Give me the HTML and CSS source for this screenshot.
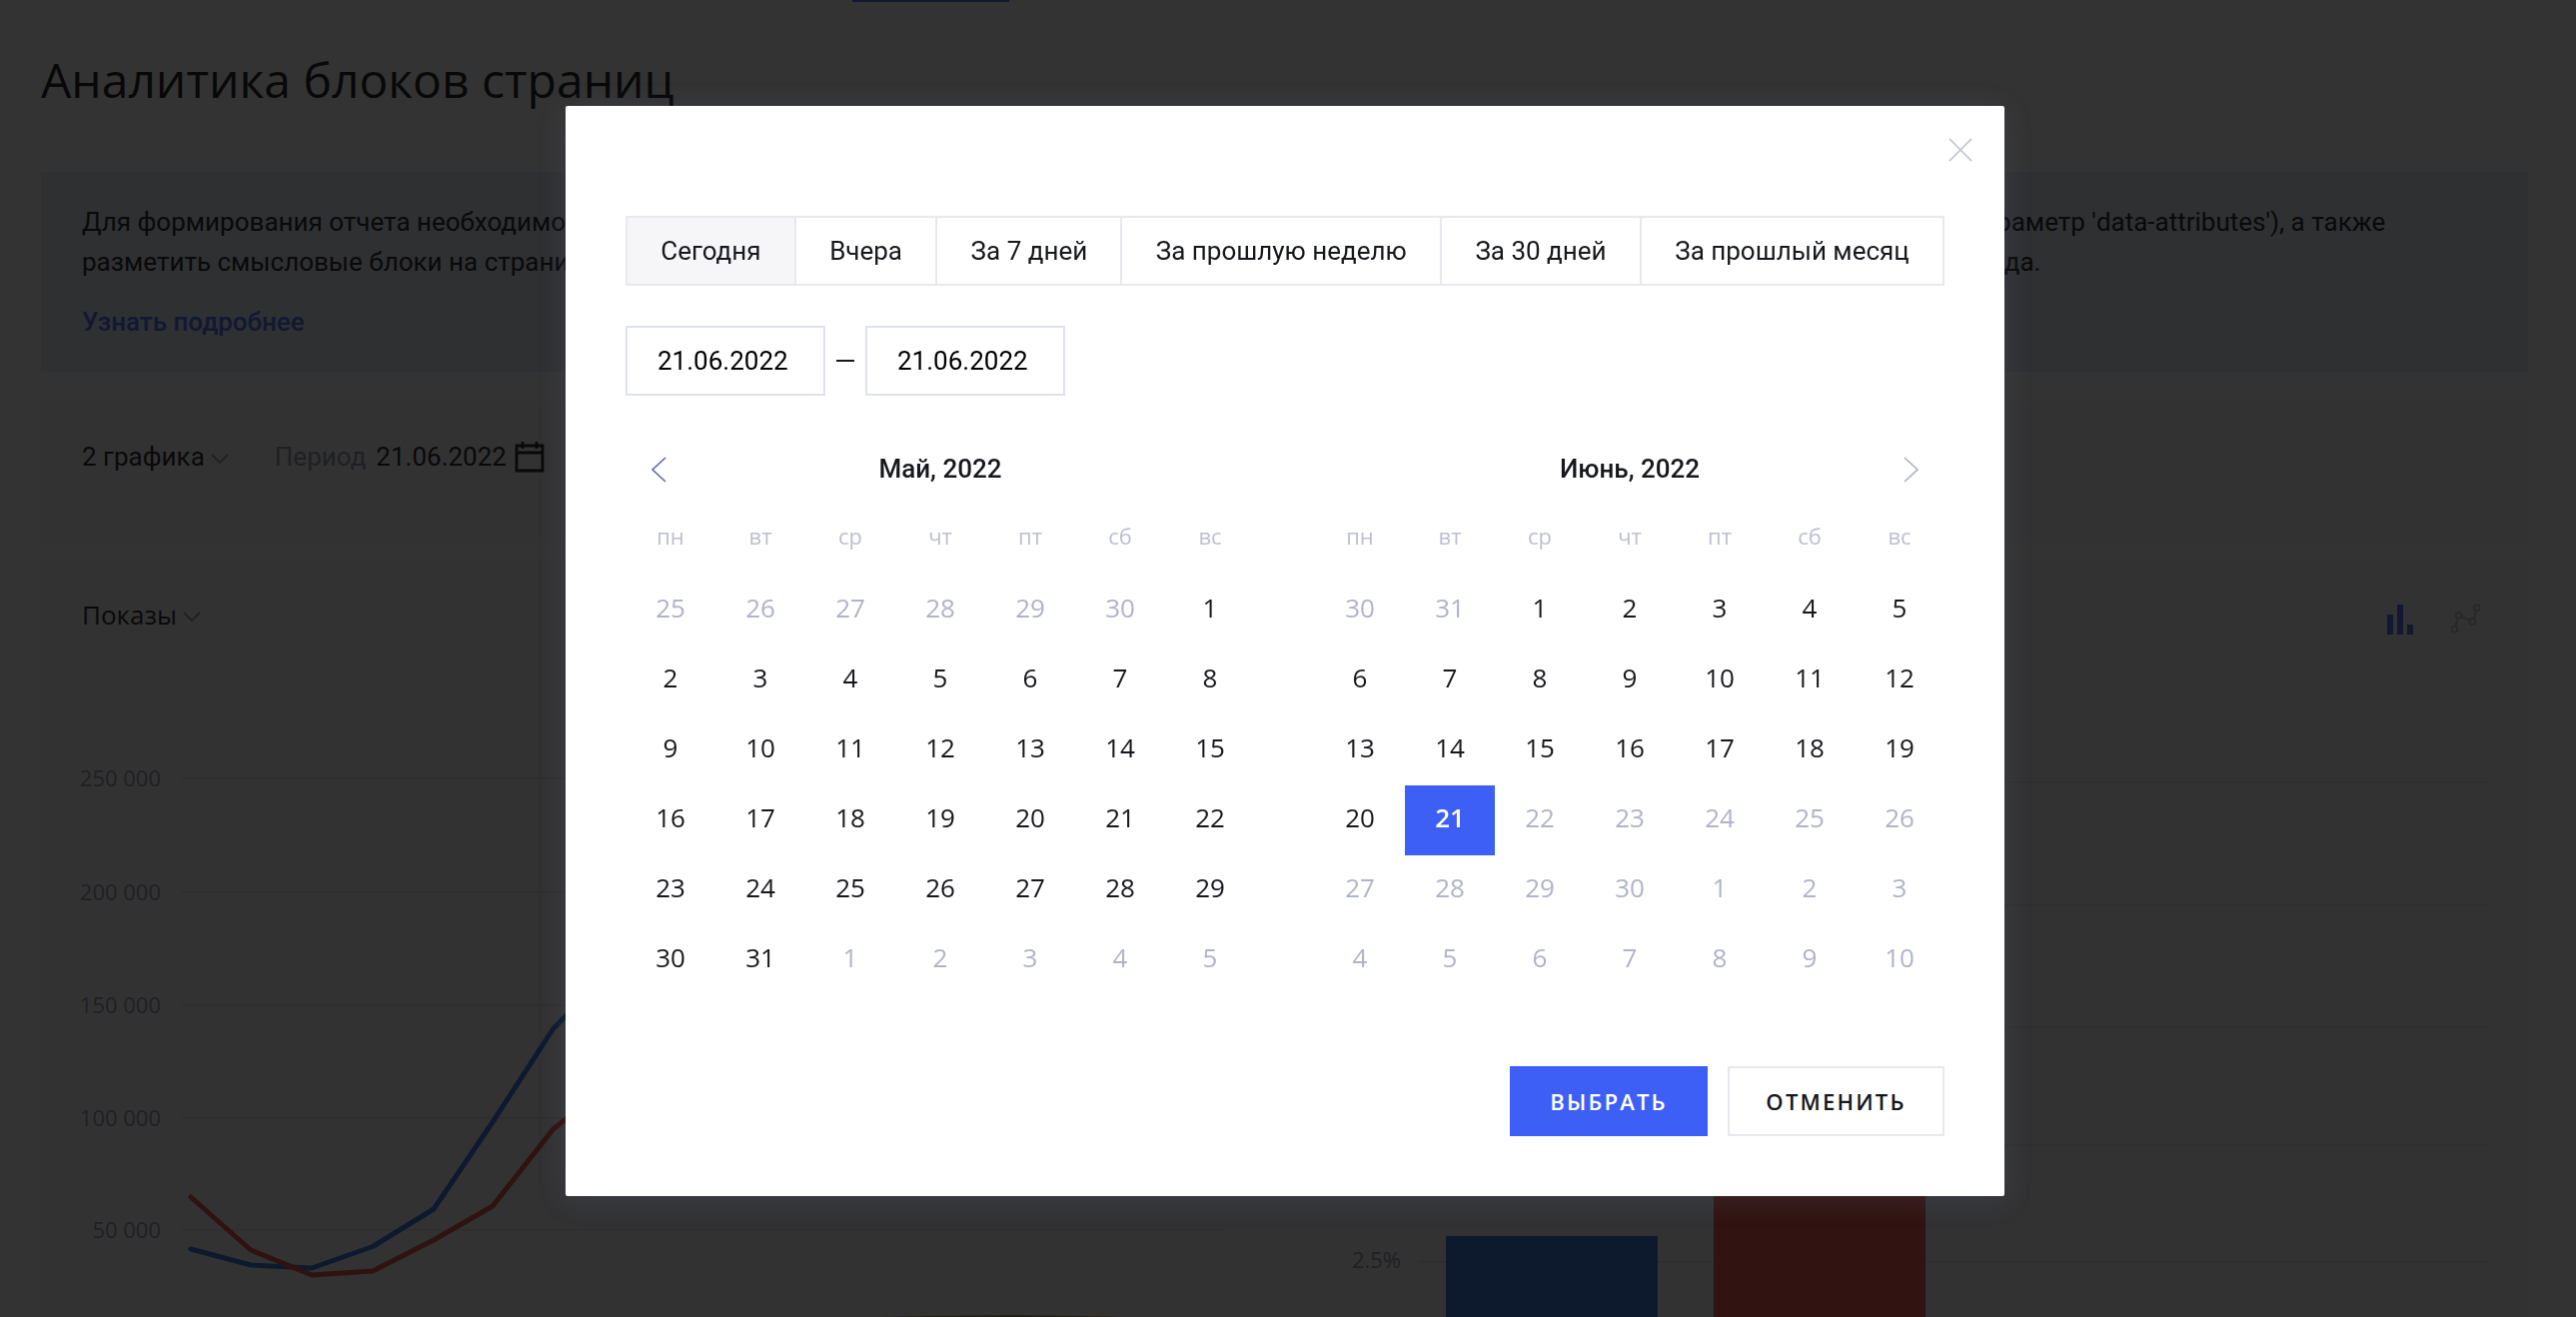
FILE: index.html
```html
<!DOCTYPE html>
<html lang="ru">
<head>
<meta charset="utf-8">
<title>Аналитика блоков страниц</title>
<link rel="stylesheet" href="styles.css">
</head>
<body>
<div class="page">
  <div class="top-tab"></div>
  <h1 class="title">Аналитика блоков страниц</h1>
  <section class="banner">
    <p class="banner-text">Для формирования отчета необходимо обновить код счетчика на страницах сайта и включить в его настройках сбор сведений об атрибутах элементов (параметр 'data-attributes'), а также<br>разметить смысловые блоки на страницах сайтов специальными атрибутами, как это подробнее описано в нужном разделе документации об установке кода.</p>
    <a class="banner-link">Узнать подробнее</a>
  </section>
  <section class="toolbar">
    <span class="select">2 графика <svg class="chev" viewBox="0 0 18 10"><path d="M1 1l8 8 8-8"/></svg></span>
    <span class="period-label">Период</span>
    <span class="period-value">21.06.2022</span>
    <svg class="cal" viewBox="0 0 30 32"><path d="M2 5h26v25H2zM2 12h26M8 1v7M22 1v7"/></svg>
  </section>
  <section class="charts">
    <div class="charts-head">
      <span class="metric">Показы <svg class="chev" viewBox="0 0 18 10"><path d="M1 1l8 8 8-8"/></svg></span>
      <span class="chart-icons">
        <svg class="ico-bars" viewBox="0 0 26 30"><path d="M0 10h6v20H0zM10 0h6v30h-6zM20 20h6v10h-6z"/></svg>
        <svg class="ico-line" viewBox="0 0 30 29"><path d="M5.3 22L7.7 13.5M11.3 12L19.7 15.7M24 14.3L26 5.8"/><circle cx="4.5" cy="24.7" r="3"/><circle cx="8.5" cy="10.7" r="3"/><circle cx="22.5" cy="17" r="3"/><circle cx="27" cy="3" r="3"/></svg>
      </span>
    </div>
    <svg class="plot" viewBox="0 0 2489 758">
      <g class="grid">
        <path d="M140 219H1184M140 333H1184M140 446H1184M140 559H1184M140 671H1184"/>
        <path d="M1379 223H2449M1379 346H2449M1379 468H2449M1379 586H2449M1379 703H2449"/>
      </g>
      <g class="ylab">
        <text x="120" y="227">250 000</text>
        <text x="120" y="341">200 000</text>
        <text x="120" y="454">150 000</text>
        <text x="120" y="567">100 000</text>
        <text x="120" y="679">50 000</text>
        <text x="1361" y="709">2.5%</text>
      </g>
      <rect class="bar-blue" x="1406" y="677" width="212" height="81"/>
      <rect class="bar-red" x="1674" y="560" width="212" height="198"/>
      <polyline class="line-blue" points="150,690 210,706 271,709 332,687.5 393,650 452,563 512.6,469.5 600,380"/>
      <polyline class="line-red" points="150,638 210,691 271,716 332,712 393,681 452,647 512.6,570 600,500"/>
      <path class="line-yellow" d="M742 764Q880 758 1000 759T1109 764"/>
    </svg>
  </section>
</div>
<div class="overlay">
  <div class="modal">
    <svg class="close" viewBox="0 0 26 26"><path d="M1 1l24 24M25 1L1 25"/></svg>
    <div class="tabs">
      <button class="tab is-active">Сегодня</button>
      <button class="tab">Вчера</button>
      <button class="tab">За 7 дней</button>
      <button class="tab">За прошлую неделю</button>
      <button class="tab">За 30 дней</button>
      <button class="tab">За прошлый месяц</button>
    </div>
    <div class="range">
      <span class="date-input">21.06.2022</span>
      <span class="dash"></span>
      <span class="date-input">21.06.2022</span>
    </div>
    <div class="months">
      <div class="month">
        <div class="month-head">
          <svg class="arrow arrow-prev" viewBox="0 0 16 26"><path d="M15 1L2 13l13 12"/></svg>
          <span>Май, 2022</span>
        </div>
        <div class="days">
          <span class="wd">пн</span><span class="wd">вт</span><span class="wd">ср</span><span class="wd">чт</span><span class="wd">пт</span><span class="wd">сб</span><span class="wd">вс</span>
          <span class="d off">25</span><span class="d off">26</span><span class="d off">27</span><span class="d off">28</span><span class="d off">29</span><span class="d off">30</span><span class="d">1</span>
          <span class="d">2</span><span class="d">3</span><span class="d">4</span><span class="d">5</span><span class="d">6</span><span class="d">7</span><span class="d">8</span>
          <span class="d">9</span><span class="d">10</span><span class="d">11</span><span class="d">12</span><span class="d">13</span><span class="d">14</span><span class="d">15</span>
          <span class="d">16</span><span class="d">17</span><span class="d">18</span><span class="d">19</span><span class="d">20</span><span class="d">21</span><span class="d">22</span>
          <span class="d">23</span><span class="d">24</span><span class="d">25</span><span class="d">26</span><span class="d">27</span><span class="d">28</span><span class="d">29</span>
          <span class="d">30</span><span class="d">31</span><span class="d off">1</span><span class="d off">2</span><span class="d off">3</span><span class="d off">4</span><span class="d off">5</span>
        </div>
      </div>
      <div class="month">
        <div class="month-head">
          <span>Июнь, 2022</span>
          <svg class="arrow arrow-next" viewBox="0 0 16 26"><path d="M1 1l13 12L1 25"/></svg>
        </div>
        <div class="days">
          <span class="wd">пн</span><span class="wd">вт</span><span class="wd">ср</span><span class="wd">чт</span><span class="wd">пт</span><span class="wd">сб</span><span class="wd">вс</span>
          <span class="d off">30</span><span class="d off">31</span><span class="d">1</span><span class="d">2</span><span class="d">3</span><span class="d">4</span><span class="d">5</span>
          <span class="d">6</span><span class="d">7</span><span class="d">8</span><span class="d">9</span><span class="d">10</span><span class="d">11</span><span class="d">12</span>
          <span class="d">13</span><span class="d">14</span><span class="d">15</span><span class="d">16</span><span class="d">17</span><span class="d">18</span><span class="d">19</span>
          <span class="d">20</span><span class="d sel">21</span><span class="d off">22</span><span class="d off">23</span><span class="d off">24</span><span class="d off">25</span><span class="d off">26</span>
          <span class="d off">27</span><span class="d off">28</span><span class="d off">29</span><span class="d off">30</span><span class="d off">1</span><span class="d off">2</span><span class="d off">3</span>
          <span class="d off">4</span><span class="d off">5</span><span class="d off">6</span><span class="d off">7</span><span class="d off">8</span><span class="d off">9</span><span class="d off">10</span>
        </div>
      </div>
    </div>
    <div class="actions">
      <button class="btn btn-primary">ВЫБРАТЬ</button>
      <button class="btn btn-ghost">ОТМЕНИТЬ</button>
    </div>
  </div>
</div>
</body>
</html>
```
FILE: styles.css
```css
* { box-sizing: border-box; }
html, body { margin: 0; height: 100%; overflow: hidden; }
body { background: #fff; font-family: Roboto, "Liberation Sans", sans-serif; color: #16181d; }

.page { height: 1318px; padding: 0 48px 0 41px; background: #fff; color: #08080c; overflow: hidden; }
.top-tab { width: 157px; height: 2px; margin-left: 812px; background: #3d5ff5; }
.title { margin: 43px 0 0; height: 127px; font: 500 48px/70px "Open Sans", sans-serif; color: #000; white-space: nowrap; }
.banner { height: 200px; padding: 30px 41px; background: #e6e9f8; font-size: 26px; line-height: 40px; white-space: nowrap; overflow: hidden; }
.banner-text { margin: 0; }
.banner-link { display: block; margin-top: 20px; font-weight: 500; color: #3d5ff5; }
.toolbar { display: flex; align-items: center; height: 140px; margin-top: 30px; padding: 0 41px 30px; background: #f8f8fb; font-size: 26px; }
.select { display: flex; align-items: center; gap: 6px; margin-right: 46px; }
.chev { width: 18px; height: 10px; fill: none; stroke: #8e93a6; stroke-width: 2; margin-top: 4px; }
.period-label { color: #8a8fa3; margin-right: 10px; }
.cal { width: 30px; height: 32px; margin-left: 8px; fill: none; stroke: #08080c; stroke-width: 2.8; }
.charts { position: relative; margin-top: 18px; height: 760px; background: #f8f8fb; }
.charts-head { display: flex; align-items: center; justify-content: space-between; padding: 39px 41px 0; height: 80px; }
.metric { display: flex; align-items: center; gap: 6px; margin-top: -10px; font: 400 26px "Open Sans", sans-serif; }
.chart-icons { display: flex; gap: 37px; align-items: center; margin-right: 7px; }
.ico-bars { width: 26px; height: 30px; fill: #3d5ff5; }
.ico-line { width: 30px; height: 29px; fill: none; stroke: #bbb; stroke-width: 2; }
.plot { position: absolute; left: 0; top: 0; width: 2489px; height: 758px; overflow: visible; }
.grid path { stroke: #e4e6ee; stroke-width: 2; fill: none; }
.ylab text { font: 400 22px "Open Sans", sans-serif; fill: #8a8fa3; text-anchor: end; }
.bar-blue { fill: #1f6ae0; }
.bar-red { fill: #ef4b39; }
polyline { fill: none; stroke-width: 5; stroke-linejoin: round; stroke-linecap: round; }
.line-blue { stroke: #1f6ae0; }
.line-red { stroke: #e0402f; }
.line-yellow { fill: none; stroke: #a88a10; stroke-width: 5; }

.overlay { position: fixed; inset: 0; display: flex; justify-content: center; align-items: flex-start; padding: 106px 6px 0 0; background: rgba(10, 10, 10, .83); }
.modal { position: relative; width: 1440px; height: 1091px; padding: 110px 60px 0; background: #fff; border-radius: 2px; box-shadow: 0 4px 30px rgba(120, 130, 175, .16); }
.close { position: absolute; top: 32px; right: 32px; width: 24px; height: 24px; fill: none; stroke: #c5c8d8; stroke-width: 2; }
.tabs { display: flex; height: 70px; border: 2px solid #e8e8ef; }
.tab { flex: 1 1 auto; padding: 0; height: 100%; border: 0; border-left: 2px solid #e8e8ef; background: #fff; color: #16181d; font: 400 26px Roboto, sans-serif; }
.tab:first-child { border-left: 0; background: #f6f6f9; }
.range { display: flex; align-items: center; margin-top: 40px; }
.date-input { display: flex; align-items: center; width: 200px; height: 70px; padding-left: 30px; border: 2px solid #dfe2ec; font-size: 26px; color: #000; }
.dash { width: 18px; height: 2px; margin: 0 11px; background: #16181d; }
.months { display: flex; gap: 60px; margin-top: 48px; }
.month { width: 630px; }
.month-head { position: relative; display: flex; justify-content: center; align-items: center; height: 50px; font: 500 26px Roboto, sans-serif; color: #16181d; }
.arrow { position: absolute; top: 13px; width: 16px; height: 26px; fill: none; stroke-width: 1.6; }
.arrow-prev { left: 25px; stroke: #5a6aa8; }
.arrow-next { right: 25px; stroke: #a9adc4; }
.days { display: grid; grid-template-columns: repeat(7, 90px); grid-auto-rows: 70px; margin-top: 12px; font-family: "Open Sans", sans-serif; }
.wd, .d { display: flex; align-items: center; justify-content: center; }
.wd { height: 60px; font-size: 22px; color: #bcbfd2; }
.d { padding-bottom: 6px; font-size: 26px; color: #16181d; }
.d.off { color: #b0b4ca; }
.d.sel { background: #3d5ff5; color: #fff; font-weight: 600; }
.actions { position: absolute; right: 60px; bottom: 60px; display: flex; gap: 20px; }
.btn { height: 70px; padding: 0; font: 600 22px "Open Sans", sans-serif; letter-spacing: 2.2px; }
.btn-primary { width: 198px; border: 0; background: #3d5ff5; color: #fff; }
.btn-ghost { width: 217px; border: 2px solid #e8e8ef; background: #fff; color: #16181d; }
```
